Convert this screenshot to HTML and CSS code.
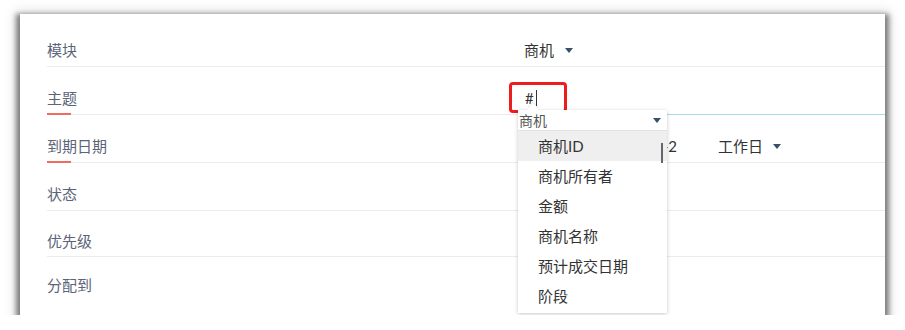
FILE: index.html
```html
<!DOCTYPE html>
<html lang="zh-CN">
<head>
    <meta charset="UTF-8">
    <title>任务表单</title>
    <link rel="stylesheet" href="styles.css">
</head>
<body>
    <div class="card">
        <div class="row">
            <div class="label">模块</div>
            <div class="value">
                <span>商机</span>
                <span class="caret"></span>
            </div>
        </div>
        <div class="row required">
            <div class="label">主题</div>
            <div class="value input-focus">
                <span>#</span><span class="cursor"></span>
            </div>
        </div>
        <div class="row required">
            <div class="label">到期日期</div>
            <div class="value">
                <span class="date">2019-8-2</span>
                <span class="day-type">工作日</span>
                <span class="caret"></span>
            </div>
        </div>
        <div class="row">
            <div class="label">状态</div>
            <div class="value"></div>
        </div>
        <div class="row short">
            <div class="label">优先级</div>
            <div class="value"></div>
        </div>
        <div class="row last">
            <div class="label">分配到</div>
            <div class="value"></div>
        </div>

        <!-- highlight around the typed merge-field trigger -->
        <div class="mark-box"></div>

        <!-- merge field picker -->
        <div class="picker">
            <div class="picker-head">
                <span>商机</span>
                <span class="caret"></span>
            </div>
            <ul class="picker-list">
                <li class="active">商机ID</li>
                <li>商机所有者</li>
                <li>金额</li>
                <li>商机名称</li>
                <li>预计成交日期</li>
                <li>阶段</li>
            </ul>
            <div class="scroll-thumb"></div>
        </div>
    </div>
</body>
</html>
```

FILE: styles.css
```css
* { box-sizing: border-box; }

body {
    margin: 0;
    background: #fff;
    font-family: "Lato", "Noto Sans CJK SC", sans-serif;
    color: #333;
}

.card {
    position: relative;
    margin: 14px 0 0 20px;
    width: 865px;
    height: 301px;
    padding-top: 5px;
    background: #fff;
    box-shadow: 0 4px 5px 4px rgba(0,0,0,0.45), 0 2px 12px 5px rgba(0,0,0,0.12);
}

.row {
    position: relative;
    display: flex;
    align-items: flex-end;
    height: 48px;
    margin-left: 27px;
    padding-bottom: 6px;
    border-bottom: 1px solid #ececec;
}

.row.short { height: 46px; padding-bottom: 5px; }

.row.last { border-bottom: none; height: 47px; padding-bottom: 9px; }

.row.required::after {
    content: '';
    position: absolute;
    left: 0;
    bottom: -1px;
    width: 24px;
    height: 2px;
    background: #f26b63;
}

.label {
    width: 477px;
    font-size: 15px;
    line-height: 20px;
    color: #5b6478;
}

.value {
    flex: 1;
    display: flex;
    align-items: center;
    font-size: 15px;
    line-height: 20px;
    color: #333;
}

.caret {
    display: inline-block;
    width: 0;
    height: 0;
    margin-left: 11px;
    border-left: 4px solid transparent;
    border-right: 4px solid transparent;
    border-top: 5px solid #34506a;
}

.input-focus {
    align-self: stretch;
    margin-bottom: -7px;
    padding: 0 0 6px 1px;
    align-items: flex-end;
    border-bottom: 1px solid #a6dcee;
}

.cursor {
    display: inline-block;
    width: 1px;
    height: 16px;
    margin: 0 0 2px 2px;
    background: #333;
}

.date {
    width: 153px;
    text-align: right;
    white-space: nowrap;
}

.day-type {
    margin-left: 41px;
}

.day-type + .caret { margin-left: 10px; }

.mark-box {
    position: absolute;
    left: 489px;
    top: 68px;
    width: 58px;
    height: 31px;
    border: 3px solid #ee1c1c;
    border-radius: 4px;
}

.picker {
    position: absolute;
    left: 498px;
    top: 96px;
    width: 149px;
    height: 203px;
    background: #fff;
    box-shadow: 0 1px 4px rgba(0,0,0,0.22);
}

.picker::before {
    content: '';
    position: absolute;
    left: 11px;
    top: -5px;
    width: 8px;
    height: 8px;
    background: #fff;
    transform: rotate(45deg);
    box-shadow: -1px -1px 1px rgba(0,0,0,0.08);
}

.picker-head {
    position: relative;
    display: flex;
    align-items: center;
    justify-content: space-between;
    height: 21px;
    padding: 0 6px 0 1px;
    font-size: 14px;
    color: #555;
    border-bottom: 1px solid #e2e2e2;
    background: #fff;
}

.picker-head .caret { margin-left: 0; }

.picker-list {
    margin: 0;
    padding: 0;
    list-style: none;
}

.picker-list li {
    height: 30px;
    line-height: 30px;
    padding-left: 20px;
    font-size: 15px;
    color: #333;
}

.picker-list li.active { background: #efefef; }

.scroll-thumb {
    position: absolute;
    left: 143px;
    top: 33px;
    width: 2px;
    height: 20px;
    background: #666;
}
```
